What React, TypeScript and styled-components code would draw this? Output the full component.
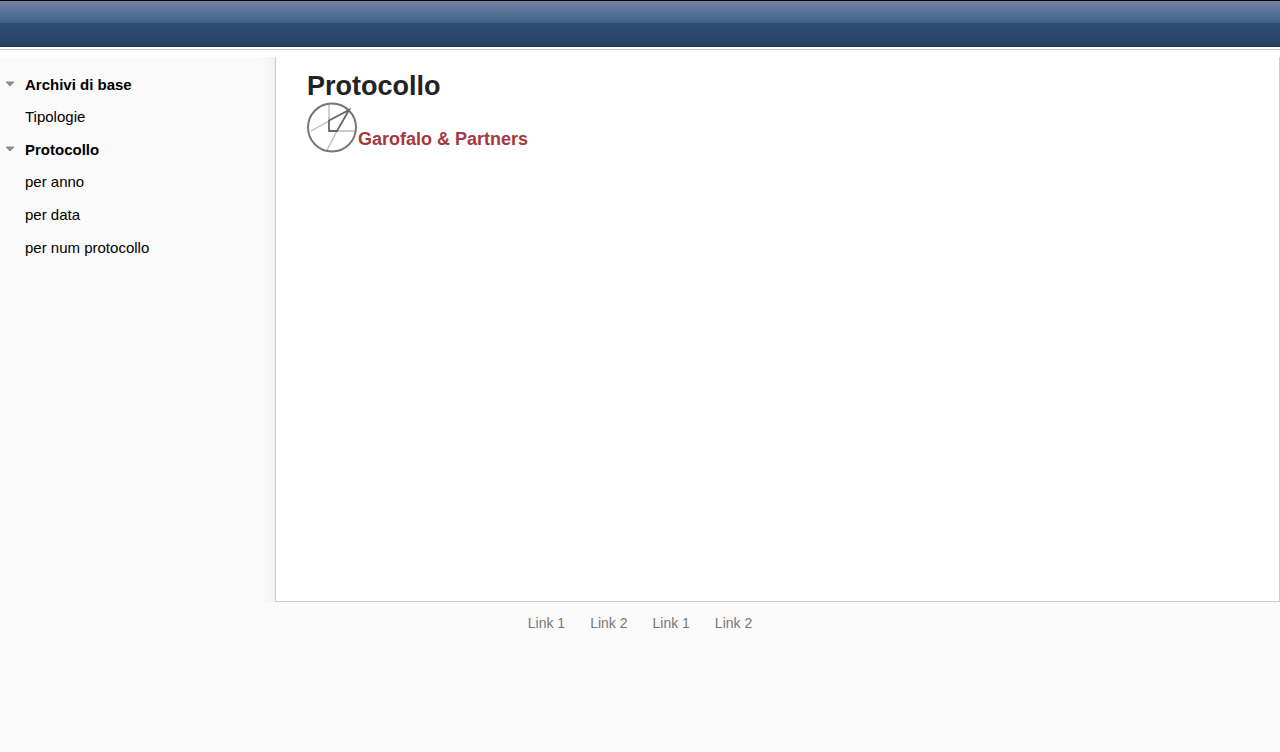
import React from 'react';
import styled, { createGlobalStyle } from 'styled-components';

const GlobalStyle = createGlobalStyle`
  * { box-sizing: border-box; }
  body {
    margin: 0;
    background: #fafafa;
    font-family: 'Liberation Sans', Arial, sans-serif;
    color: #222;
  }
`;

const Banner = styled.header`
  height: 47px;
  border-top: 1px solid #000;
  border-bottom: 1px solid #1f3454;
  background: linear-gradient(#7484a4, #3d5e85 50%, #2e4e76 50%, #293f5e);
`;

const Divider = styled.div`
  height: 10px;
  padding-top: 2px;
  background: #fff;

  &::before {
    content: '';
    display: block;
    height: 1px;
    background: #ccc;
  }
`;

const Layout = styled.div`
  display: flex;
  min-height: 545px;
`;

const Sidebar = styled.nav`
  flex: 0 0 275px;
  padding-top: 11px;
  background: linear-gradient(to left, #f2f2f2, #fafafa 14px);
`;

const List = styled.ul`
  margin: 0;
  padding: 0;
  list-style: none;
`;

const GroupToggle = styled.button`
  display: flex;
  align-items: center;
  gap: 10px;
  width: 100%;
  height: 32px;
  padding: 0 0 0 5px;
  border: 0;
  background: none;
  color: #000;
  font: bold 15px 'Liberation Sans', Arial, sans-serif;
  text-align: left;
  cursor: pointer;
`;

const ItemLink = styled.a`
  display: block;
  height: 33px;
  padding-left: 25px;
  color: #000;
  font-size: 15px;
  line-height: 33px;
  text-decoration: none;
`;

const Content = styled.main`
  flex: 1;
  padding: 13px 31px;
  border: 1px solid #ccc;
  border-top: 0;
  background: #fff;
`;

const Title = styled.h1`
  margin: 0;
  font-size: 27px;
  line-height: 32px;
`;

const Brand = styled.div`
  display: flex;
  align-items: flex-end;
`;

const BrandName = styled.span`
  padding-bottom: 4px;
  color: #a5383e;
  font-size: 18px;
  font-weight: bold;
  line-height: 20px;
`;

const Footer = styled.footer`
  display: flex;
  justify-content: center;
  gap: 25px;
  padding: 11px 0;
`;

const FooterLink = styled.a`
  color: #777;
  font-size: 14px;
  line-height: 20px;
  text-decoration: none;
`;

const groups = [
  { title: 'Archivi di base', items: ['Tipologie'] },
  { title: 'Protocollo', items: ['per anno', 'per data', 'per num protocollo'] },
];

const footerLinks = ['Link 1', 'Link 2', 'Link 1', 'Link 2'];

const Arrow = () => (
  <svg width="10" height="6" viewBox="0 0 10 6" aria-hidden="true">
    <path d="M1 0.500h8v1L5.500 5h-1L1 1.500z" fill="#8c8c8c" />
  </svg>
);

const BrandMark = () => (
  <svg width="51" height="51" viewBox="0 0 51 51" fill="none" aria-hidden="true">
    <path d="M22 2V19M30 29H48M22 19L4 29M30 29L20 48" stroke="#bbb" strokeWidth="1.400" />
    <circle cx="25" cy="25.500" r="24" stroke="#777" strokeWidth="2" />
    <path d="M42 8L22 18.500V29H30Z" stroke="#666" strokeWidth="1.800" />
  </svg>
);

export default function App() {
  return (
    <>
      <GlobalStyle />
      <Banner />
      <Divider />
      <Layout>
        <Sidebar>
          {groups.map((group) => (
            <section key={group.title}>
              <GroupToggle type="button" aria-expanded="true">
                <Arrow />
                {group.title}
              </GroupToggle>
              <List>
                {group.items.map((item) => (
                  <li key={item}>
                    <ItemLink href="#">{item}</ItemLink>
                  </li>
                ))}
              </List>
            </section>
          ))}
        </Sidebar>
        <Content>
          <Title>Protocollo</Title>
          <Brand>
            <BrandMark />
            <BrandName>Garofalo &amp; Partners</BrandName>
          </Brand>
        </Content>
      </Layout>
      <Footer>
        {footerLinks.map((label, index) => (
          <FooterLink key={index} href="#">
            {label}
          </FooterLink>
        ))}
      </Footer>
    </>
  );
}
